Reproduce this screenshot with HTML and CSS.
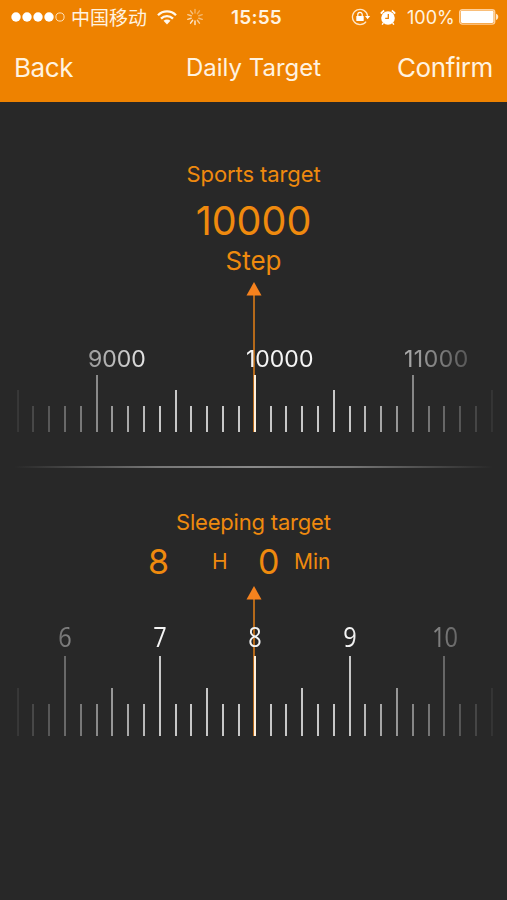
FILE: index.html
```
<!DOCTYPE html>
<html>
  <head>
    <title>Daily Target</title>
    <meta charset="UTF-8" />
    <link rel="stylesheet" href="styles.css">
  </head>

  <body>
    <header class="header">
      <div class="statusBar">
        <svg class="signal" width="55" height="12" viewBox="0 0 55 12">
          <g fill="#fff">
            <circle cx="5" cy="6" r="4.7" />
            <circle cx="16" cy="6" r="4.7" />
            <circle cx="27" cy="6" r="4.7" />
            <circle cx="38" cy="6" r="4.7" />
          </g>
          <circle cx="49" cy="6" r="4.1" fill="none" stroke="#ffe3bd" />
        </svg>
        <span class="carrier">中国移动</span>
        <svg class="wifi" width="20" height="15" viewBox="0 0 20 15">
          <g fill="none" stroke="#fff8ee" stroke-width="2.3">
            <path d="M1 5.2C6 .1 14 .1 19 5.2" />
            <path d="M4 8.6C7.4 5.2 12.6 5.2 16 8.6" />
          </g>
          <path d="M6.5 10.8C8.5 9 11.5 9 13.5 10.8L10 14.4z" fill="#fff8ee" />
        </svg>
        <svg class="spinner" width="18" height="18" viewBox="-9 -9 18 18">
          <g stroke="#fff" stroke-width="1.4" stroke-linecap="round">
            <path d="M0-4V-7.6" opacity=".4" />
            <path d="M0-4V-7.6" opacity=".35" transform="rotate(36)" />
            <path d="M0-4V-7.6" opacity=".4" transform="rotate(72)" />
            <path d="M0-4V-7.6" opacity=".5" transform="rotate(108)" />
            <path d="M0-4V-7.6" opacity=".6" transform="rotate(144)" />
            <path d="M0-4V-7.6" opacity=".85" transform="rotate(180)" />
            <path d="M0-4V-7.6" opacity=".8" transform="rotate(216)" />
            <path d="M0-4V-7.6" opacity=".7" transform="rotate(252)" />
            <path d="M0-4V-7.6" opacity=".6" transform="rotate(288)" />
            <path d="M0-4V-7.6" opacity=".5" transform="rotate(324)" />
          </g>
        </svg>
        <span class="clock">15:55</span>
        <svg class="lock" width="20" height="18" viewBox="0 0 20 18">
          <path d="M15.1 13.6A7.6 7.6 0 1 1 16.6 8" fill="none" stroke="#ffe6c6" stroke-width="1.3" />
          <path d="M14 8h5.2l-2.6 3.2z" fill="#fff" />
          <rect x="5.3" y="8" width="7.4" height="5" rx=".6" fill="#fff" />
          <path d="M6.8 8V6.6a2.2 2.2 0 0 1 4.4 0V8" fill="none" stroke="#fff" stroke-width="1.2" />
        </svg>
        <svg class="alarm" width="16" height="17" viewBox="0 0 16 17">
          <circle cx="8" cy="9" r="6.8" fill="#fff" />
          <path d="M.9 4.6A11 11 0 0 1 4.2 1.6M11.8 1.6A11 11 0 0 1 15.1 4.6" fill="none" stroke="#fff" stroke-width="1.8" />
          <path d="M3.3 14l-1.2 1.7M12.7 14l1.2 1.7" stroke="#fff" stroke-width="1.4" />
          <path d="M8.3 5v4.4H5.2" fill="none" stroke="#ee8200" stroke-width="1.3" />
        </svg>
        <span class="percent">100%</span>
        <svg class="battery" width="40" height="16" viewBox="0 0 40 16">
          <rect x=".7" y=".7" width="35" height="14.4" rx="2.6" fill="none" stroke="#ffd09a" stroke-width="1.4" />
          <rect x="1.8" y="1.8" width="32.8" height="12.2" rx="1.4" fill="#fff" />
          <path d="M37 4.8c3 .8 3 5.4 0 6.2z" fill="#ffe6c6" />
        </svg>
      </div>

      <div class="navBar">
        <a class="navLink back">Back</a>
        <h1 class="title">Daily Target</h1>
        <a class="navLink confirm">Confirm</a>
      </div>
    </header>

    <main>
      <section class="target sports">
        <h2 class="targetName">Sports target</h2>
        <p class="steps">10000</p>
        <p class="stepUnit">Step</p>
        <div class="ruler">
          <svg class="needle" width="16" height="150" viewBox="0 0 16 150">
            <path d="M8 8V150" stroke="#b4691a" stroke-width="2" />
            <path d="M8 0L15.5 13.5H.5z" fill="#f5821e" />
          </svg>
          <div class="scale" data-major="5" data-step="10" data-mid="5">
            <div class="labels">
              <span>9000</span>
              <span>10000</span>
              <span>11000</span>
            </div>
            <div class="ticks"></div>
          </div>
        </div>
      </section>

      <div class="divider"></div>

      <section class="target sleeping">
        <h2 class="targetName">Sleeping target</h2>
        <p class="duration">
          <span class="hours">8</span>
          <span class="unit hourUnit">H</span>
          <span class="minutes">0</span>
          <span class="unit minUnit">Min</span>
        </p>
        <div class="ruler">
          <svg class="needle" width="16" height="150" viewBox="0 0 16 150">
            <path d="M8 8V150" stroke="#b4691a" stroke-width="2" />
            <path d="M8 0L15.5 13.5H.5z" fill="#f5821e" />
          </svg>
          <div class="scale" data-major="3" data-step="6" data-mid="3">
            <div class="labels">
              <span>6</span>
              <span>7</span>
              <span>8</span>
              <span>9</span>
              <span>10</span>
            </div>
            <div class="ticks"></div>
          </div>
        </div>
      </section>
    </main>

    <script>
      (function () {
        const tickCount = 31;

        document.querySelectorAll(".scale").forEach(function (scale) {
          const first = Number(scale.dataset.major);
          const step = Number(scale.dataset.step);
          const mid = Number(scale.dataset.mid);
          const ticks = scale.querySelector(".ticks");

          for (let i = 0; i < tickCount; i++) {
            const tick = document.createElement("i");
            const offset = (i - first + step) % step;
            tick.className = "tick";
            if (offset === 0) {
              tick.classList.add("major");
            } else if (offset === mid) {
              tick.classList.add("mid");
            }
            if (i === (tickCount - 1) / 2) {
              tick.classList.add("current");
            }
            ticks.appendChild(tick);
          }
        });
      })();
    </script>
  </body>
</html>
```
FILE: styles.css
```
html * {
  margin: 0;
  padding: 0;
  box-sizing: border-box;
}

body {
  font-family: Inter, "Noto Sans CJK SC", sans-serif;
  background-color: #282828;
  color: #ef8a0e;
  width: 507px;
  height: 900px;
  overflow: hidden;
}

h1,
h2 {
  font-weight: normal;
}

.header {
  background-color: #ee8200;
  color: #fff3e0;
  height: 102px;
}

.statusBar {
  display: flex;
  align-items: center;
  height: 34px;
  padding-left: 11px;
  white-space: nowrap;
}

.statusBar svg {
  flex: none;
}

.carrier {
  font-family: "Noto Sans CJK SC", sans-serif;
  font-size: 19px;
  line-height: 34px;
  width: 91px;
  padding-left: 5px;
}

.spinner {
  margin-left: 9px;
}

.clock {
  font-size: 19px;
  font-weight: 600;
  letter-spacing: 0.2px;
  width: 122px;
  padding-left: 27px;
}

.lock {
  margin-left: 25px;
}

.alarm {
  margin-left: 9px;
}

.percent {
  font-size: 18px;
  width: 63px;
  padding-left: 11px;
}

.navBar {
  display: grid;
  grid-template-columns: 1fr auto 1fr;
  align-items: center;
  height: 67px;
  padding: 0 14px;
}

.navLink {
  font-size: 26px;
  letter-spacing: -0.4px;
}

.confirm {
  text-align: right;
}

.title {
  font-size: 24px;
}

.target {
  display: flex;
  flex-direction: column;
  align-items: center;
}

.sports {
  padding-top: 58px;
}

.targetName {
  font-size: 22px;
  line-height: 28px;
  letter-spacing: -0.1px;
}

.steps {
  font-size: 39.5px;
  line-height: 46px;
  margin-top: 10px;
}

.stepUnit {
  font-size: 26px;
  line-height: 34px;
}

.ruler {
  position: relative;
  width: 100%;
  padding: 0 14px;
}

.sports .ruler {
  margin-top: 4px;
}

.needle {
  position: absolute;
  left: 245.5px;
  top: 0;
}

.scale {
  position: relative;
  -webkit-mask-image: linear-gradient(to right, rgba(0, 0, 0, 0.08), #000 30%, #000 70%, rgba(0, 0, 0, 0.08));
  mask-image: linear-gradient(to right, rgba(0, 0, 0, 0.08), #000 30%, #000 70%, rgba(0, 0, 0, 0.08));
}

.labels {
  display: flex;
  color: #f5f5f5;
}

.labels span {
  flex: none;
}

.sports .scale {
  padding-top: 64px;
}

.sports .labels {
  font-size: 23px;
  line-height: 26px;
  padding-left: 74px;
}

.sports .labels span {
  width: 158px;
}

.sports .labels span:last-child {
  width: auto;
  letter-spacing: 0.5px;
}

.ticks {
  display: flex;
  align-items: flex-end;
  justify-content: space-between;
  padding: 0 0 0 2.5px;
  width: 479px;
}

.sports .ticks {
  margin-top: 3px;
  height: 57px;
}

.tick {
  width: 2px;
  height: 26px;
  background-color: #c8c8c8;
}

.mid {
  height: 42px;
}

.major {
  height: 57px;
}

.current {
  background-color: #fff0dc;
}

.divider {
  height: 2px;
  margin: 34px 14px 0;
  background: linear-gradient(to right, transparent, #777 30%, #8a8a8a 50%, #777 70%, transparent);
}

.sleeping {
  padding-top: 40px;
}

.sleeping .targetName {
  width: 155px;
  letter-spacing: -0.2px;
  white-space: nowrap;
}

.duration {
  display: flex;
  align-items: center;
  width: 184px;
  height: 50px;
  margin-left: -27px;
}

.hours,
.minutes {
  font-size: 34px;
}

.hours {
  width: 64px;
}

.unit {
  font-size: 21px;
}

.hourUnit {
  width: 46px;
}

.minutes {
  width: 36px;
}

.sleeping .scale {
  padding-top: 36px;
}

.sleeping .labels {
  font-family: "Open Sans", sans-serif;
  font-size: 28px;
  line-height: 28px;
  padding-left: 3px;
}

.sleeping .labels span {
  width: 95px;
  letter-spacing: -1px;
  text-align: center;
  transform: scaleX(0.84);
}

.sleeping .ticks {
  margin-top: 6px;
  height: 80px;
}

.sleeping .tick {
  height: 32px;
}

.sleeping .mid {
  height: 48px;
}

.sleeping .major {
  height: 80px;
}
```
